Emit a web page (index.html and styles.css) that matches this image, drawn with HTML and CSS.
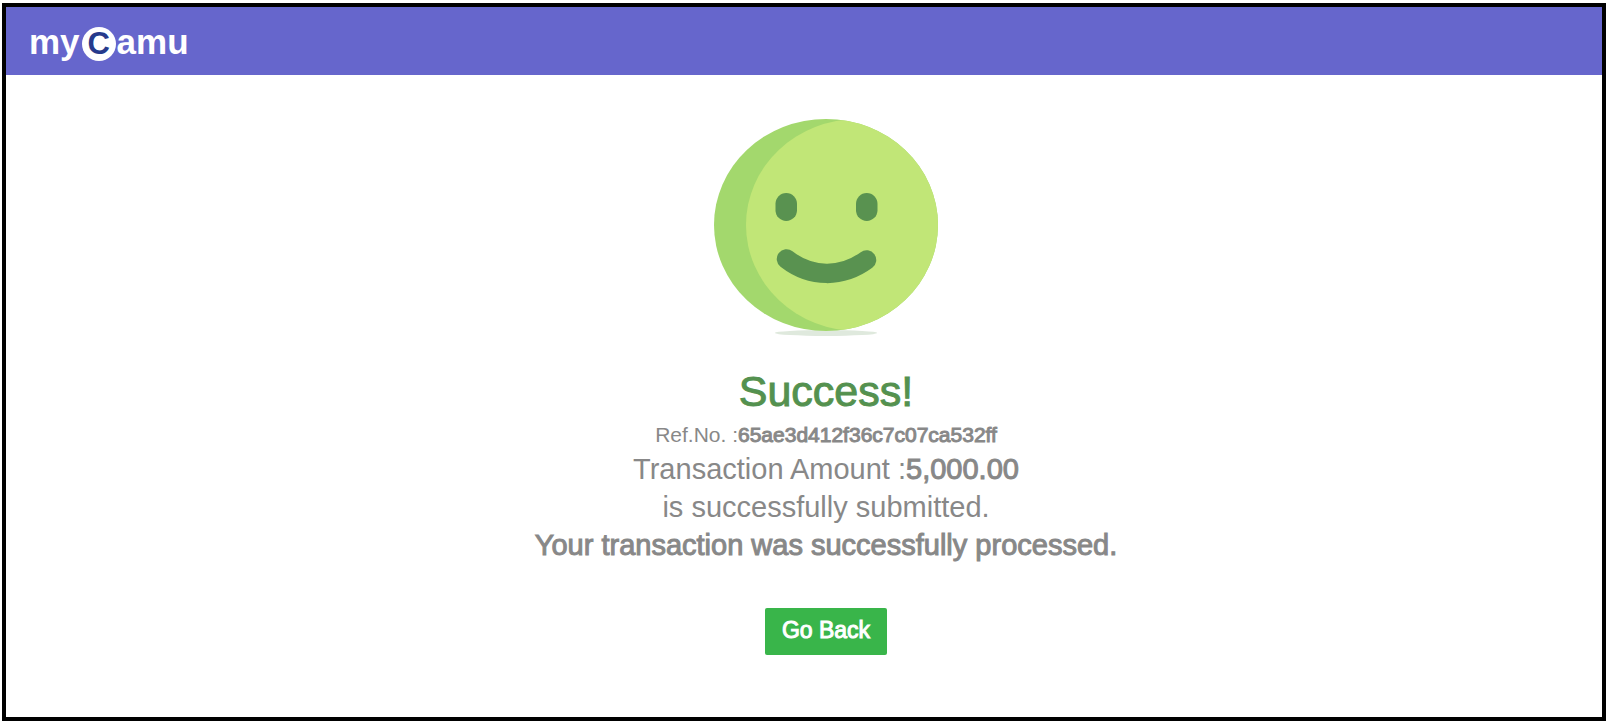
FILE: index.html
```html
<!DOCTYPE html>
<html lang="en">
<head>
<meta charset="utf-8">
<meta name="viewport" content="width=device-width, initial-scale=1">
<title>myCamu</title>
<link rel="stylesheet" href="styles.css">
</head>
<body>
<div class="frame">
  <header class="topbar">
    <div class="logo"><span>my</span><span class="logo-c">C</span><span>amu</span></div>
  </header>
  <main class="result">
    <svg class="smiley" viewBox="0 0 224 218" role="img" aria-label="Smiling face">
      <defs><clipPath id="face"><ellipse cx="112" cy="106" rx="112" ry="106"/></clipPath></defs>
      <ellipse cx="112" cy="214" rx="51" ry="3" fill="#dfe9dd"/>
      <ellipse cx="112" cy="106" rx="112" ry="106" fill="#a3d86d"/>
      <ellipse cx="144" cy="106" rx="112" ry="106" fill="#c1e677" clip-path="url(#face)"/>
      <rect x="61.500" y="74" width="21.500" height="28" rx="10.700" fill="#599250"/>
      <rect x="142" y="74" width="21.500" height="28" rx="10.700" fill="#599250"/>
      <path d="M72.500 140C97 159 128 159 152.500 141" fill="none" stroke="#599250" stroke-width="19.500" stroke-linecap="round"/>
    </svg>
    <h1 class="title">Success!</h1>
    <p class="reference">Ref.No. :<strong>65ae3d412f36c7c07ca532ff</strong></p>
    <p class="line">Transaction Amount :<strong>5,000.00</strong></p>
    <p class="line">is successfully submitted.</p>
    <p class="line"><strong>Your transaction was successfully processed.</strong></p>
    <button class="back" type="button">Go Back</button>
  </main>
</div>
</body>
</html>
```
FILE: styles.css
```css
* {
  box-sizing: border-box;
}

body {
  margin: 0;
  background: #fff;
  color: #888;
  font-family: "Liberation Sans", Arial, sans-serif;
}

.frame {
  display: flex;
  flex-direction: column;
  min-height: calc(100vh - 6px);
  margin: 3px 2px;
  border: 4px solid #000;
}

.topbar {
  display: flex;
  align-items: center;
  padding: 18px 23px 16px;
  background: #66c;
}

.logo {
  display: flex;
  align-items: center;
  color: #fff;
  font-size: 35px;
  font-weight: 700;
  line-height: 34px;
}

.logo-c {
  display: flex;
  align-items: center;
  justify-content: center;
  width: 34px;
  height: 34px;
  margin: 2px 1px -2px 2px;
  border-radius: 50%;
  background: #fff;
  color: #263a8c;
  font-size: 31px;
}

.result {
  display: flex;
  flex-direction: column;
  align-items: center;
  padding: 44px 0 56px 44px;
  text-align: center;
}

.smiley {
  width: 224px;
  height: 218px;
}

.title {
  margin: 29px 0 0;
  color: #54914f;
  font-size: 43px;
  font-weight: 400;
  line-height: 50px;
  -webkit-text-stroke: 1px currentColor;
}

.reference,
.line {
  margin: 0;
}

.reference {
  padding-top: 3px;
  font-size: 21px;
  line-height: 31px;
}

.line {
  font-size: 29px;
  line-height: 38px;
}

strong {
  font-weight: 400;
  -webkit-text-stroke: 1px currentColor;
}

.back {
  margin-top: 44px;
  padding: 8px 17px 11px;
  border: 0;
  border-radius: 2px;
  background: #39b54a;
  color: #fff;
  font-family: inherit;
  font-size: 23px;
  line-height: 28px;
  -webkit-text-stroke: 1px currentColor;
}
```
